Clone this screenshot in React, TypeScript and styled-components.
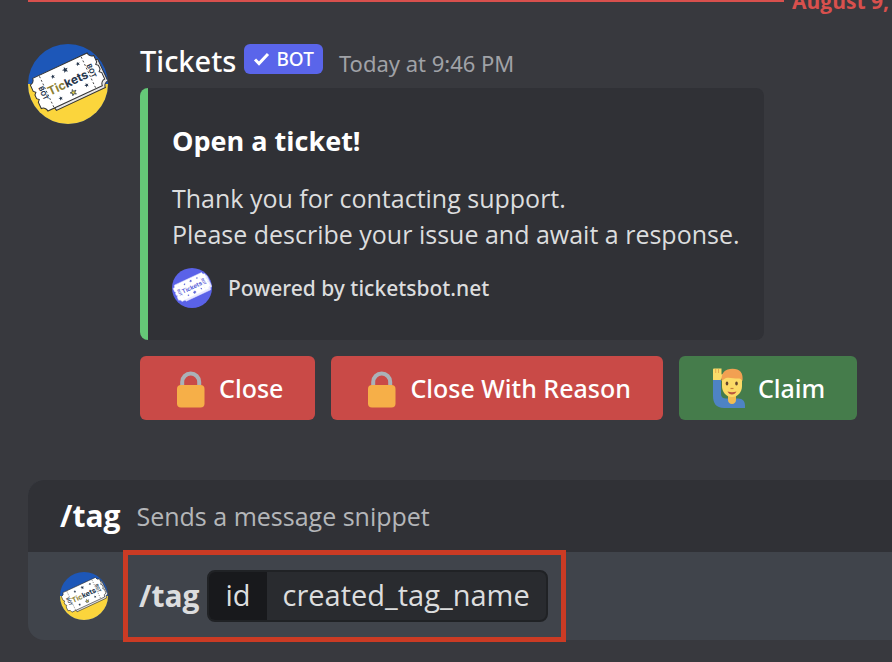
import React from "react";
import styled, { createGlobalStyle } from "styled-components";

const mediumFont = '"Noto Sans", "Open Sans", sans-serif';

const GlobalStyle = createGlobalStyle`
  *, *::before, *::after { box-sizing: border-box; }
  body {
    margin: 0;
    background: #38393e;
    color: #dcddde;
    font-family: "Open Sans", "Noto Sans", sans-serif;
    overflow-x: hidden;
  }
`;

const Page = styled.main`
  display: flex;
  flex-direction: column;
  padding-left: 28px;
  overflow: hidden;
  min-height: 100vh;
`;

const Divider = styled.div`
  display: flex;
  align-items: center;
  gap: 8px;
  height: 2px;
  padding-right: 3px;
  color: #d8504d;
  font-size: 21px;
  font-weight: 700;
  line-height: 24px;
  white-space: nowrap;
`;

const DividerLine = styled.span`
  flex: 1;
  height: 2px;
  background: #d8504d;
`;

const Message = styled.article`
  display: grid;
  grid-template-columns: 80px 1fr;
  column-gap: 32px;
  margin-top: 42px;
  padding-right: 16px;
`;

const Avatar = styled.svg<{ $size: number }>`
  display: block;
  flex: none;
  width: ${(p) => p.$size}px;
  height: ${(p) => p.$size}px;
  border-radius: 50%;
`;

const MessageHeader = styled.header`
  display: flex;
  align-items: flex-start;
  height: 44px;
  font-family: ${mediumFont};
  white-space: nowrap;
`;

const Author = styled.span`
  color: #fff;
  font-size: 29px;
  font-weight: 500;
  line-height: 34px;
`;

const BotTag = styled.span`
  display: inline-flex;
  align-items: center;
  gap: 6px;
  height: 30px;
  margin: 0 16px 0 8px;
  padding: 0 9px;
  border-radius: 6px;
  background: #5a65ea;
  color: #fff;
  font-size: 19px;
  font-weight: 500;
  line-height: 30px;
`;

const Timestamp = styled.time`
  color: #a0a2a7;
  font-size: 22px;
  line-height: 38px;
`;

const Embed = styled.section`
  max-width: 624px;
  padding: 32px 16px 32px 24px;
  border-left: 8px solid #65c877;
  border-radius: 8px;
  background: #303136;
`;

const EmbedTitle = styled.h1`
  margin: 0;
  color: #fff;
  font-size: 27px;
  font-weight: 700;
  line-height: 42px;
`;

const EmbedText = styled.p`
  margin: 18px 0 16px;
  font-size: 25px;
  line-height: 36px;
`;

const EmbedFooter = styled.footer`
  display: flex;
  align-items: center;
  gap: 16px;
  font-family: ${mediumFont};
  font-size: 21px;
  font-weight: 500;
  line-height: 40px;
`;

const Actions = styled.div`
  display: flex;
  gap: 16px;
  margin-top: 16px;
`;

const ActionButton = styled.button<{ $tone: "danger" | "success" }>`
  display: inline-flex;
  align-items: center;
  gap: 7px;
  height: 64px;
  padding: 0 32px;
  border: 0;
  border-radius: 6px;
  background: ${(p) => (p.$tone === "danger" ? "#c94a47" : "#457c4b")};
  color: #fff;
  font-family: ${mediumFont};
  font-size: 25px;
  font-weight: 500;
  line-height: 36px;
  white-space: nowrap;
  cursor: pointer;
`;

const Emoji = styled.svg`
  flex: none;
  width: 40px;
  height: 40px;
`;

const Composer = styled.section`
  margin-top: 60px;
  border-radius: 16px 0 0 16px;
  background: #40444b;
`;

const CommandHint = styled.div`
  display: flex;
  align-items: center;
  gap: 16px;
  height: 72px;
  padding-left: 32px;
  border-radius: 16px 0 0 0;
  background: #303136;
  color: #b4b6b9;
  font-size: 25px;
  line-height: 36px;
  white-space: nowrap;
`;

const CommandName = styled.strong<{ $bright?: boolean }>`
  color: ${(p) => (p.$bright ? "#fff" : "#dcddde")};
  font-size: 30px;
  font-weight: 700;
  line-height: 36px;
`;

const CommandRow = styled.div`
  display: flex;
  align-items: center;
  gap: 20px;
  height: 88px;
  padding-left: 32px;
`;

const Highlight = styled.div`
  display: flex;
  align-items: center;
  gap: 8px;
  height: 82px;
  padding: 0 13px 0 11px;
  outline: 5px solid #cb3b24;
`;

const Option = styled.label`
  display: flex;
  height: 52px;
  border: 2px solid #202225;
  border-radius: 8px;
  background: #292b2f;
  overflow: hidden;
  font-size: 29px;
  line-height: 46px;
`;

const OptionKey = styled.span`
  padding: 0 16px;
  background: #18191c;
`;

const OptionValue = styled.input`
  field-sizing: content;
  height: 46px;
  padding: 0 16px;
  border: 0;
  outline: 0;
  background: transparent;
  color: inherit;
  font: inherit;
`;

const star = "M0-4.6 1.2-1.5 4.5-1.4 1.9.6 2.8 3.8 0 2-2.8 3.8-1.9.6-4.5-1.4-1.2-1.5Z";

function TicketAvatar({ size, blurple = false }: { size: number; blurple?: boolean }) {
  const ink = blurple ? "#5a62d8" : "#26364c";
  const edge = blurple ? "#dfe0ff" : "#333";
  return (
    <Avatar $size={size} viewBox="0 0 80 80" role="img" aria-label="Tickets">
      <rect width="80" height="80" fill={blurple ? "#5a62e8" : "#1d57b8"} />
      {!blurple && <rect y="40" width="80" height="40" fill="#fbd53c" />}
      <g transform="translate(39.500 38) rotate(-25)">
        <path
          d="M-29-13H32a5 5 0 0 0 5 5V16a5 5 0 0 0-5 5H-22Z"
          fill={blurple ? "#eceaff" : "#e8e8e8"}
          stroke={edge}
        />
        <path
          d="M-30-18H30a5 5 0 0 0 5 5v7l-2 2 2 2v4l-2 2 2 2v7a5 5 0 0 0-5 5H-30a5 5 0 0 0-5-5v-7l2-2-2-2v-4l2-2-2-2v-7a5 5 0 0 0 5-5Z"
          fill="#fff"
          stroke={edge}
        />
        <path d="M-23-17V17M23-17V17" stroke={edge} strokeWidth=".8" strokeDasharray="2 2" />
        <g fill={ink}>
          <path d={star} transform="translate(3 -12) scale(.7)" />
          <path d={star} transform="translate(-11 -11) scale(.5)" />
          <path d={star} transform="translate(17 -12) scale(.5)" />
          <path d={star} transform="translate(-13 12) scale(.5)" />
          <path d={star} transform="translate(16 11) scale(.5)" />
        </g>
        <path
          d={star}
          transform="translate(1 12) scale(.7)"
          fill={blurple ? ink : "#e2ce4a"}
          stroke={ink}
        />
        <g fontFamily="Inter, sans-serif" fontWeight="700" textAnchor="middle" fill={ink}>
          <text y="5" fontSize="12">
            <tspan fill={blurple ? ink : "#8c8034"}>Tic</tspan>
            <tspan>kets</tspan>
          </text>
          <text transform="translate(-26 0) rotate(90)" y="3" fontSize="7">BOT</text>
          <text transform="translate(26 0) rotate(90)" y="2" fontSize="7">BOT</text>
        </g>
      </g>
    </Avatar>
  );
}

function LockEmoji() {
  return (
    <Emoji viewBox="0 0 40 40" aria-hidden="true">
      <path d="M10.200 20v-6a8.500 8.500 0 0 1 17 0v6" fill="none" stroke="#aab2b8" strokeWidth="4" />
      <rect x="5" y="17" width="27.500" height="22.500" rx="4" fill="#f6af48" />
    </Emoji>
  );
}

function RaisedHandEmoji() {
  return (
    <Emoji viewBox="0 0 40 40" aria-hidden="true">
      <path d="M2 11h8v15c0 3 2 4.500 5 4.500h12c5 0 7 3 7 7V40H13C5 40 2 35 2 28Z" fill="#4e83c4" />
      <path d="M17 27h8v5c0 2-1.500 4-4 4s-4-2-4-4Z" fill="#f2bd52" />
      <path d="M2 1.500Q2 .5 3 .5h7.500v6c2-1 2.500 1 1 3l-2 2.500H2Z" fill="#fadc6a" />
      <path d="M4.700 1v4M7.500 1v4" stroke="#df9d4b" strokeWidth=".8" />
      <path d="M11 11C11 5 15 2 21 2s10 4 10 10v6c0 6-4 11-10 11s-10-5-10-11Z" fill="#fbda66" />
      <path d="M10.500 13C10 5 14 .8 21.500.8S32.500 5 31.500 13c-1-1-1.500-2-3-2.500C24 11 19 9 15 10c-2 1-3 2-4.500 3Z" fill="#f2a052" />
      <ellipse cx="16" cy="15.500" rx="1.300" ry="2" fill="#65452d" />
      <ellipse cx="25.500" cy="15.500" rx="1.300" ry="2" fill="#65452d" />
      <path d="M19.500 20.500h3" stroke="#c57f3b" strokeWidth="1.200" />
      <path d="M16.500 23.500q4.500 1.500 9 0-1.500 3-4.500 3t-4.500-3Z" fill="#b9553e" />
    </Emoji>
  );
}

export default function App() {
  return (
    <>
      <GlobalStyle />
      <Page>
        <Divider>
          <DividerLine />
          <span>August 9,</span>
        </Divider>

        <Message>
          <TicketAvatar size={80} />
          <div>
            <MessageHeader>
              <Author>Tickets</Author>
              <BotTag>
                <svg width="17" height="14" viewBox="0 0 17 14" aria-hidden="true">
                  <path d="m2 7.500 4 4L15 2" fill="none" stroke="#fff" strokeWidth="3" />
                </svg>
                BOT
              </BotTag>
              <Timestamp>Today at 9:46 PM</Timestamp>
            </MessageHeader>

            <Embed>
              <EmbedTitle>Open a ticket!</EmbedTitle>
              <EmbedText>
                Thank you for contacting support.
                <br />
                Please describe your issue and await a response.
              </EmbedText>
              <EmbedFooter>
                <TicketAvatar size={40} blurple />
                <span>Powered by ticketsbot.net</span>
              </EmbedFooter>
            </Embed>

            <Actions>
              <ActionButton type="button" $tone="danger">
                <LockEmoji />
                Close
              </ActionButton>
              <ActionButton type="button" $tone="danger">
                <LockEmoji />
                Close With Reason
              </ActionButton>
              <ActionButton type="button" $tone="success">
                <RaisedHandEmoji />
                Claim
              </ActionButton>
            </Actions>
          </div>
        </Message>

        <Composer>
          <CommandHint>
            <CommandName $bright>/tag</CommandName>
            <span>Sends a message snippet</span>
          </CommandHint>
          <CommandRow>
            <TicketAvatar size={48} />
            <Highlight>
              <CommandName>/tag</CommandName>
              <Option>
                <OptionKey>id</OptionKey>
                <OptionValue type="text" defaultValue="created_tag_name" spellCheck={false} />
              </Option>
            </Highlight>
          </CommandRow>
        </Composer>
      </Page>
    </>
  );
}
